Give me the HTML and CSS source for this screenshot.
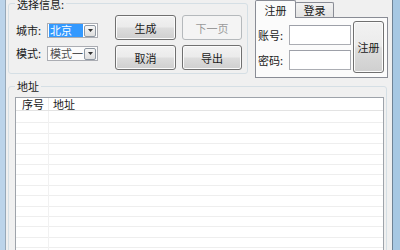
FILE: index.html
```html
<!DOCTYPE html>
<html lang="zh-CN">
<head>
<meta charset="utf-8">
<link rel="stylesheet" href="styles.css">
</head>
<body>
<div class="frame">
  <div class="win">
    <div class="top">
      <div class="grp grp-sel">
        <div class="legend">选择信息:</div>
        <div class="sel-body">
          <div class="form">
            <span class="lbl">城市:</span>
            <div class="combo">
              <span class="combo-val hl">北京</span>
              <span class="drop"><svg width="5" height="3" viewBox="0 0 5 3"><path d="M0 0h5L2.5 3z" fill="#333"/></svg></span>
            </div>
            <span class="lbl">模式:</span>
            <div class="combo combo-grey">
              <span class="combo-val">模式一</span>
              <span class="drop"><svg width="5" height="3" viewBox="0 0 5 3"><path d="M0 0h5L2.5 3z" fill="#333"/></svg></span>
            </div>
          </div>
          <div class="btns">
            <button class="btn">生成</button>
            <button class="btn" disabled>下一页</button>
            <button class="btn">取消</button>
            <button class="btn">导出</button>
          </div>
        </div>
      </div>
      <div class="tabctl">
        <div class="tabs">
          <div class="tab active">注册</div>
          <div class="tab">登录</div>
        </div>
        <div class="panel">
          <div class="fields">
            <span class="lbl">账号:</span><div class="input"></div>
            <span class="lbl">密码:</span><div class="input"></div>
          </div>
          <button class="btn btn-reg">注册</button>
        </div>
      </div>
    </div>
    <div class="grp grp-addr">
      <div class="legend">地址</div>
      <div class="list">
        <div class="list-head">
          <div class="col col-no">序号</div>
          <div class="col col-addr">地址</div>
        </div>
        <div class="list-body"></div>
      </div>
    </div>
  </div>
</div>
</body>
</html>
```

FILE: styles.css
```css
* { box-sizing: border-box; }
html, body { margin: 0; padding: 0; }
body {
  width: 400px;
  height: 250px;
  overflow: hidden;
  font-family: "Noto Sans CJK SC", "Noto Sans", sans-serif;
  font-size: 11px;
  color: #1a1a1a;
  background: #f0f0f0;
}
.frame {
  display: flex;
  height: 250px;
  border-left: 5px solid #bcd4ea;
  border-right: 7px solid #a7c8e3;
}
.win {
  flex: 1;
  background: #f0f0f0;
  border-left: 1px solid #97a8b8;
  border-right: 1px solid #6f8396;
  overflow: hidden;
}
.top {
  display: flex;
  align-items: flex-start;
  height: 80px;
  padding-left: 2px;
  gap: 7px;
}
.grp {
  border: 1px solid #d5dfe5;
  border-radius: 3px;
}
.legend {
  width: fit-content;
  margin: -8px 0 0 6px;
  padding: 0 2px;
  height: 14px;
  line-height: 14px;
  background: #f0f0f0;
}
.grp-sel {
  width: 240px;
  height: 71px;
  margin-top: 3px;
}
.grp-sel .legend { margin-top: -7px; }
.sel-body {
  display: flex;
  align-items: flex-start;
  padding-left: 7px;
}
.form {
  display: grid;
  grid-template-columns: 31px 51px;
  grid-template-rows: 15px 15px;
  row-gap: 8px;
  margin-top: 12px;
  align-items: center;
}
.lbl { line-height: 15px; white-space: nowrap; }
.combo {
  display: flex;
  align-items: center;
  height: 15px;
  border: 1px solid #abadb3;
  background: #fff;
  padding: 0 1px;
}
.combo-val {
  height: 13px;
  line-height: 13px;
  padding-left: 1px;
  white-space: nowrap;
}
.combo-val.hl {
  width: 34px;
  background: #3399ff;
  color: #fff;
}
.combo-grey .combo-val { color: #505050; }
.combo-grey { background: #fbfbfb; }
.drop {
  margin-left: auto;
  width: 12px;
  height: 12px;
  border: 1px solid #8e97a2;
  border-radius: 2px;
  background: linear-gradient(#f6f6f6, #dedede);
  display: flex;
  align-items: center;
  justify-content: center;
}
.btns {
  display: grid;
  grid-template-columns: 61px 60px;
  grid-template-rows: 25px 25px;
  column-gap: 6px;
  row-gap: 5px;
  margin: 4px 0 0 17px;
}
.btn {
  font: inherit;
  color: #1a1a1a;
  padding: 0;
  border: 1px solid #707070;
  border-radius: 3px;
  background: linear-gradient(#f2f2f2 0%, #ebebeb 48%, #dddddd 52%, #cfcfcf 100%);
  box-shadow: inset 0 0 0 1px #fbfbfb;
}
.btn:disabled {
  color: #9a9a9a;
  border-color: #b5b9bc;
  background: #f4f4f4;
  box-shadow: none;
}
.tabctl { width: 133px; }
.tabs {
  display: flex;
  align-items: flex-end;
  height: 17px;
}
.tab {
  height: 15px;
  width: 39px;
  margin-left: -1px;
  border: 1px solid #898c95;
  border-bottom: none;
  border-radius: 2px 2px 0 0;
  background: linear-gradient(#f2f2f2, #e3e3e3);
  text-align: center;
  line-height: 14px;
}
.tab.active {
  width: 41px;
  height: 18px;
  margin-left: 0;
  margin-bottom: -1px;
  background: #fbfbfb;
  position: relative;
  z-index: 1;
  line-height: 18px;
}
.panel {
  display: flex;
  align-items: flex-start;
  height: 61px;
  border: 1px solid #898c95;
  background: #fbfbfb;
  padding-left: 2px;
}
.fields {
  display: grid;
  grid-template-columns: 31px 62px;
  grid-template-rows: 20px 20px;
  row-gap: 5px;
  margin-top: 7px;
  align-items: center;
}
.input {
  height: 20px;
  border: 1px solid #abadb3;
  border-top-color: #9da0a8;
  background: #fff;
}
.btn-reg {
  width: 31px;
  height: 52px;
  margin: 3px 0 0 2px;
}
.grp-addr {
  width: 379px;
  height: 200px;
  margin: 6px 0 0 2px;
}
.list {
  margin: 4px 0 0 6px;
  width: 369px;
  height: 200px;
  border: 1px solid #9ea3aa;
  background: #fff;
}
.list-head {
  display: flex;
  height: 13px;
  border-bottom: 1px solid #e3e3e3;
  line-height: 12px;
}
.col-no {
  width: 33px;
  padding-left: 6px;
  border-right: 1px solid #ececec;
}
.col-addr { padding-left: 4px; }
.list-body {
  height: 180px;
  background-image:
    linear-gradient(to right, transparent 32px, #f1f1f1 32px, #f1f1f1 33px, transparent 33px),
    repeating-linear-gradient(to bottom, #fff 0, #fff 9.4px, #eeeeee 9.4px, #eeeeee 10.4px);
  background-position: 0 0, 0 2px;
}
```
